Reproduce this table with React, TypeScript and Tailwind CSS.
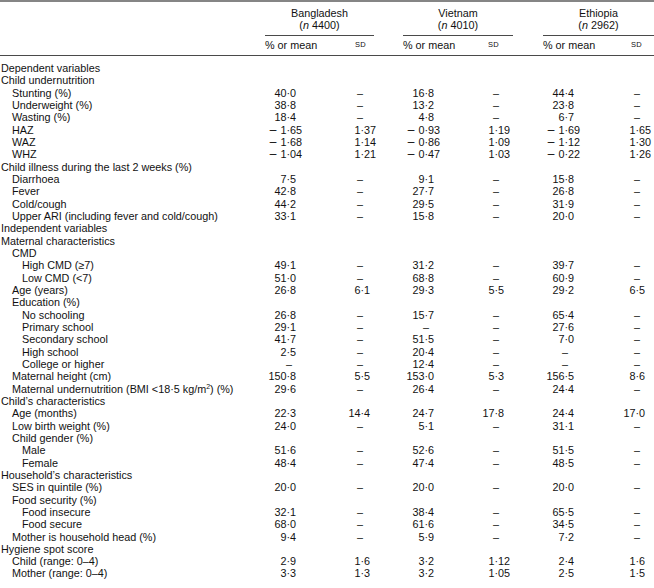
import React from "react";

type V = string | null;
type Row = { label: React.ReactNode; lvl: 0 | 1 | 2; v?: V[] };

const D = "–";

const rows: Row[] = [
  { label: "Dependent variables", lvl: 0 },
  { label: "Child undernutrition", lvl: 0 },
  { label: "Stunting (%)", lvl: 1, v: ["40·0", D, "16·8", D, "44·4", D] },
  { label: "Underweight (%)", lvl: 1, v: ["38·8", D, "13·2", D, "23·8", D] },
  { label: "Wasting (%)", lvl: 1, v: ["18·4", D, "4·8", D, "6·7", D] },
  { label: "HAZ", lvl: 1, v: ["−1·65", "1·37", "−0·93", "1·19", "−1·69", "1·65"] },
  { label: "WAZ", lvl: 1, v: ["−1·68", "1·14", "−0·86", "1·09", "−1·12", "1·30"] },
  { label: "WHZ", lvl: 1, v: ["−1·04", "1·21", "−0·47", "1·03", "−0·22", "1·26"] },
  { label: "Child illness during the last 2 weeks (%)", lvl: 0 },
  { label: "Diarrhoea", lvl: 1, v: ["7·5", D, "9·1", D, "15·8", D] },
  { label: "Fever", lvl: 1, v: ["42·8", D, "27·7", D, "26·8", D] },
  { label: "Cold/cough", lvl: 1, v: ["44·2", D, "29·5", D, "31·9", D] },
  { label: "Upper ARI (including fever and cold/cough)", lvl: 1, v: ["33·1", D, "15·8", D, "20·0", D] },
  { label: "Independent variables", lvl: 0 },
  { label: "Maternal characteristics", lvl: 0 },
  { label: "CMD", lvl: 1 },
  { label: "High CMD (≥7)", lvl: 2, v: ["49·1", D, "31·2", D, "39·7", D] },
  { label: "Low CMD (<7)", lvl: 2, v: ["51·0", D, "68·8", D, "60·9", D] },
  { label: "Age (years)", lvl: 1, v: ["26·8", "6·1", "29·3", "5·5", "29·2", "6·5"] },
  { label: "Education (%)", lvl: 1 },
  { label: "No schooling", lvl: 2, v: ["26·8", D, "15·7", D, "65·4", D] },
  { label: "Primary school", lvl: 2, v: ["29·1", D, D, D, "27·6", D] },
  { label: "Secondary school", lvl: 2, v: ["41·7", D, "51·5", D, "7·0", D] },
  { label: "High school", lvl: 2, v: ["2·5", D, "20·4", D, D, D] },
  { label: "College or higher", lvl: 2, v: [D, D, "12·4", D, D, D] },
  { label: "Maternal height (cm)", lvl: 1, v: ["150·8", "5·5", "153·0", "5·3", "156·5", "8·6"] },
  {
    label: (
      <>
        Maternal undernutrition (BMI &lt;18·5 kg/m<sup className="text-[7px]">2</sup>) (%)
      </>
    ),
    lvl: 1,
    v: ["29·6", D, "26·4", D, "24·4", D],
  },
  { label: "Child’s characteristics", lvl: 0 },
  { label: "Age (months)", lvl: 1, v: ["22·3", "14·4", "24·7", "17·8", "24·4", "17·0"] },
  { label: "Low birth weight (%)", lvl: 1, v: ["24·0", D, "5·1", D, "31·1", D] },
  { label: "Child gender (%)", lvl: 1 },
  { label: "Male", lvl: 2, v: ["51·6", D, "52·6", D, "51·5", D] },
  { label: "Female", lvl: 2, v: ["48·4", D, "47·4", D, "48·5", D] },
  { label: "Household’s characteristics", lvl: 0 },
  { label: "SES in quintile (%)", lvl: 1, v: ["20·0", D, "20·0", D, "20·0", D] },
  { label: "Food security (%)", lvl: 1 },
  { label: "Food insecure", lvl: 2, v: ["32·1", D, "38·4", D, "65·5", D] },
  { label: "Food secure", lvl: 2, v: ["68·0", D, "61·6", D, "34·5", D] },
  { label: "Mother is household head (%)", lvl: 1, v: ["9·4", D, "5·9", D, "7·2", D] },
  { label: "Hygiene spot score", lvl: 0 },
  { label: "Child (range: 0–4)", lvl: 1, v: ["2·9", "1·6", "3·2", "1·12", "2·4", "1·6"] },
  { label: "Mother (range: 0–4)", lvl: 1, v: ["3·3", "1·3", "3·2", "1·05", "2·5", "1·5"] },
];

const COLS = [
  { int: "w-[21.5px]", dash: "w-[27px]" },
  { int: "w-[30.5px]", dash: "w-[33px]" },
  { int: "w-[21.5px]", dash: "w-[26px]" },
  { int: "w-[26.5px]", dash: "w-[31px]" },
  { int: "w-[21.5px]", dash: "w-[25px]" },
  { int: "w-[27.5px]", dash: "w-[32px]" },
];

const INDENT = ["pl-[1px]", "pl-[12px]", "pl-[22px]"];

const GRID =
  "grid grid-cols-[265px_65px_44px_29px_65px_45px_30px_65px_46px]";

function Num({ value, col }: { value: V; col: number }) {
  if (value === null || value === undefined) return <div className="h-[12.34px]" />;
  const c = COLS[col];
  if (value === D) {
    return (
      <div className="flex h-[12.34px]">
        <span className={`${c.dash} shrink-0 text-right`}>–</span>
      </div>
    );
  }
  const [ip, fp] = value.split("·");
  const neg = ip.startsWith("−");
  const digits = neg ? ip.slice(1) : ip;
  return (
    <div className="flex h-[12.34px] whitespace-nowrap">
      <span className={`${c.int} shrink-0 text-right`}>
        {neg && (
          <span
            className="mr-[3px] leading-[0]"
            style={{ fontFamily: '"DejaVu Sans", sans-serif' }}
          >
            −
          </span>
        )}
        {digits}
      </span>
      <span>·{fp}</span>
    </div>
  );
}

function BodyRow({ r }: { r: Row }) {
  const v = r.v ?? [null, null, null, null, null, null];
  return (
    <div className={`${GRID} h-[12.34px]`}>
      <div className={`${INDENT[r.lvl]} whitespace-nowrap`}>{r.label}</div>
      <Num value={v[0]} col={0} />
      <Num value={v[1]} col={1} />
      <div />
      <Num value={v[2]} col={2} />
      <Num value={v[3]} col={3} />
      <div />
      <Num value={v[4]} col={4} />
      <Num value={v[5]} col={5} />
    </div>
  );
}

function Country({ name, n }: { name: string; n: string }) {
  return (
    <div className="col-span-2 flex flex-col items-center border-b border-[#4a4a4a] pb-[3px]">
      <div>{name}</div>
      <div>
        (<i>n</i> {n})
      </div>
    </div>
  );
}

export default function App() {
  return (
    <div
      className="w-[654px] h-[588px] bg-white text-[#111] text-[10.8px] leading-[12.34px]"
      style={{ fontFamily: '"Liberation Sans", Arial, Helvetica, sans-serif' }}
    >
      <div className="h-[2px] bg-[#858585]" />
      <div className="border-b border-[#4a4a4a]">
        <div className={`${GRID} pt-[5px]`}>
          <div />
          <Country name="Bangladesh" n="4400" />
          <div />
          <Country name="Vietnam" n="4010" />
          <div />
          <Country name="Ethiopia" n="2962" />
        </div>
        <div className={`${GRID} pt-[3px] pb-[4px]`}>
          <div />
          <div>% or mean</div>
          <div className="pl-[25px] text-[7.5px] tracking-[0.2px]">SD</div>
          <div />
          <div>% or mean</div>
          <div className="pl-[20px] text-[7.5px] tracking-[0.2px]">SD</div>
          <div />
          <div>% or mean</div>
          <div className="pl-[23px] text-[7.5px] tracking-[0.2px]">SD</div>
        </div>
      </div>
      <div className="pt-[6px] pb-[10px]">
        {rows.map((r, i) => (
          <BodyRow key={i} r={r} />
        ))}
      </div>
      <div className="h-[2px] bg-[#858585]" />
    </div>
  );
}
